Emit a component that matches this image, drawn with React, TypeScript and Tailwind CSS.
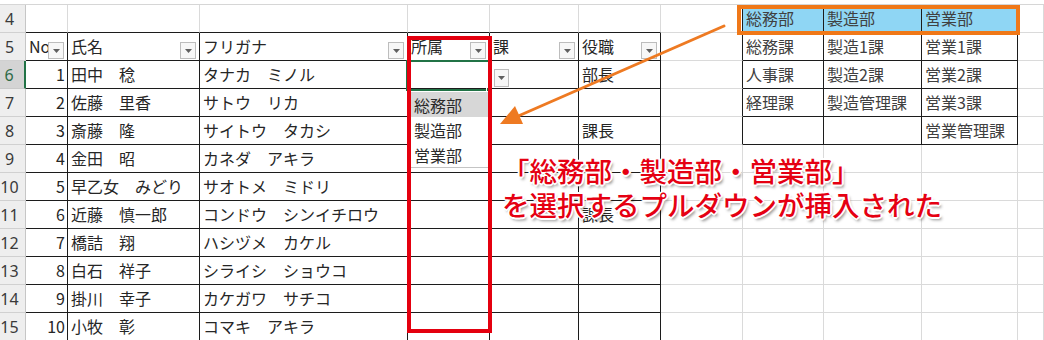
const COLS = 'grid-cols-[26px_42px_132px_208px_82px_89px_82px_82px_81px_98px_96px_1fr]'

const headers = ['No.', '氏名', 'フリガナ', '所属', '課', '役職']

const people: string[][] = [
  ['1', '田中　稔', 'タナカ　ミノル', '', '', '部長'],
  ['2', '佐藤　里香', 'サトウ　リカ', '', '', ''],
  ['3', '斎藤　隆', 'サイトウ　タカシ', '', '', '課長'],
  ['4', '金田　昭', 'カネダ　アキラ', '', '', ''],
  ['5', '早乙女　みどり', 'サオトメ　ミドリ', '', '', ''],
  ['6', '近藤　慎一郎', 'コンドウ　シンイチロウ', '', '', '課長'],
  ['7', '橋詰　翔', 'ハシヅメ　カケル', '', '', ''],
  ['8', '白石　祥子', 'シライシ　ショウコ', '', '', ''],
  ['9', '掛川　幸子', 'カケガワ　サチコ', '', '', ''],
  ['10', '小牧　彰', 'コマキ　アキラ', '', '', ''],
]

// 部署リスト（H4:J8）
const depts: string[][] = [
  ['総務部', '製造部', '営業部'],
  ['総務課', '製造1課', '営業1課'],
  ['人事課', '製造2課', '営業2課'],
  ['経理課', '製造管理課', '営業3課'],
  ['', '', '営業管理課'],
]

const rows = [4, 5, 6, 7, 8, 9, 10, 11, 12, 13, 14, 15]
const cols = [0, 1, 2, 3, 4, 5, 6, 7, 8, 9, 10, 11]

function FilterButton() {
  return (
    <div className="absolute right-[3px] bottom-[1px] flex h-[17px] w-[16px] items-center justify-center border border-[#bdbdbd] bg-[#f7f7f7]">
      <svg width="7" height="4" viewBox="0 0 7 4">
        <path d="M0 0h7L3.5 4z" fill="#5f5f5f" />
      </svg>
    </div>
  )
}

function cellText(row: number, col: number) {
  if (row === 5 && col >= 1 && col <= 6) return headers[col - 1]
  if (row >= 6 && col >= 1 && col <= 6) return people[row - 6][col - 1]
  if (row <= 8 && col >= 8 && col <= 10) return depts[row - 4][col - 8]
  return ''
}

function Cell({ row, col }: { row: number; col: number }) {
  if (col === 0) {
    const active = row === 6
    return (
      <div
        className={
          active
            ? 'flex items-center justify-center border-r-2 border-b border-r-[#217346] border-b-[#c9c9c9] bg-[#d4d4d4] pr-[6px] text-[16px] text-[#2f6b47]'
            : 'flex items-center justify-center border-r border-b border-r-[#c6c6c6] border-b-[#d0d0d0] bg-[#eeeeee] pr-[6px] text-[16px] text-[#3a3a3a]'
        }
      >
        <span className="font-['Noto_Sans',sans-serif]">{row}</span>
      </div>
    )
  }

  const mainTable = col >= 1 && col <= 6
  const blackR = (mainTable && row >= 5) || (col >= 7 && col <= 10 && row <= 8)
  const blackB = (mainTable && row >= 4) || (col >= 8 && col <= 10 && row <= 8)
  const text = cellText(row, col)
  const numeric = row >= 6 && col === 1
  const right = col >= 8 && col <= 10 && row <= 8

  return (
    <div
      className={[
        'relative flex items-center overflow-hidden whitespace-nowrap border-r border-b px-[3px] text-[16px] leading-none',
        blackR ? 'border-r-[#1c1c1c]' : 'border-r-[#dadada]',
        blackB ? 'border-b-[#1c1c1c]' : 'border-b-[#dadada]',
        numeric ? 'justify-end pr-[2px]' : 'justify-start',
        right ? 'text-[#404040]' : 'text-[#262626]',
        row === 4 && right ? 'bg-[#8fd6f4]' : 'bg-white',
      ].join(' ')}
    >
      <span className="pb-[1px]">{text}</span>
      {row === 5 && mainTable && <FilterButton />}
      {row === 6 && col === 5 && (
        <div className="absolute top-[8px] left-[4px] flex h-[18px] w-[15px] items-center justify-center border border-[#bdbdbd] bg-[#f7f7f7]">
          <svg width="7" height="4" viewBox="0 0 7 4">
            <path d="M0 0h7L3.5 4z" fill="#5f5f5f" />
          </svg>
        </div>
      )}
    </div>
  )
}

export default function App() {
  return (
    <div className="relative h-[340px] w-[1044px] overflow-hidden bg-white pt-[4px] font-['Noto_Sans_CJK_JP','Noto_Sans',sans-serif]">
      <div className={`grid ${COLS} auto-rows-[28px] border-t border-t-[#d6d6d6]`}>
        {rows.map((r) => cols.map((c) => <Cell key={`${r}-${c}`} row={r} col={c} />))}
      </div>

      {/* D6 active cell */}
      <div className="absolute top-[60px] left-[406px] h-[31px] w-[84px] border-2 border-[#217346]">
        <div className="absolute -right-[4px] -bottom-[4px] h-[6px] w-[6px] border border-white bg-[#217346]" />
      </div>

      {/* dropdown list */}
      <div className="absolute top-[91px] left-[409px] flex h-[77px] w-[80px] flex-col border-b border-[#c4c4c4] bg-white pt-[1px] text-[16px] leading-none text-[#2a2a2a]">
        <div className="flex h-[25px] items-center bg-[#d7d7d7] pl-[5px]">総務部</div>
        <div className="flex h-[25px] items-center pl-[5px]">製造部</div>
        <div className="flex h-[25px] items-center pl-[5px]">営業部</div>
      </div>

      {/* red frame around 所属 */}
      <div className="absolute top-[36px] left-[407px] h-[297px] w-[85px] border-4 border-[#e4000f]" />

      {/* orange frame around department headers */}
      <div className="absolute top-[5px] left-[737px] h-[30px] w-[283px] border-4 border-[#f07818]" />

      {/* arrow */}
      <svg className="pointer-events-none absolute inset-0" width="1044" height="340" viewBox="0 0 1044 340">
        <line x1="724" y1="26" x2="516" y2="117" stroke="#ee7a22" strokeWidth="3" strokeLinecap="round" />
        <path d="M500 124 L523 124 L515 106 Z" fill="#ee7a22" />
      </svg>

      {/* annotation */}
      <div className="absolute top-[153px] left-[502px] text-[27.5px] leading-[34px] font-medium whitespace-nowrap text-[#e50012] [text-shadow:1px_1px_0_#fff,-1px_-1px_0_#fff,1px_-1px_0_#fff,-1px_1px_0_#fff,2px_0_0_#fff,-2px_0_0_#fff,0_2px_0_#fff,0_-2px_0_#fff,2px_3px_3px_rgba(0,0,0,0.45)]">
        <div>「総務部・製造部・営業部」</div>
        <div>を選択するプルダウンが挿入された</div>
      </div>
    </div>
  )
}
